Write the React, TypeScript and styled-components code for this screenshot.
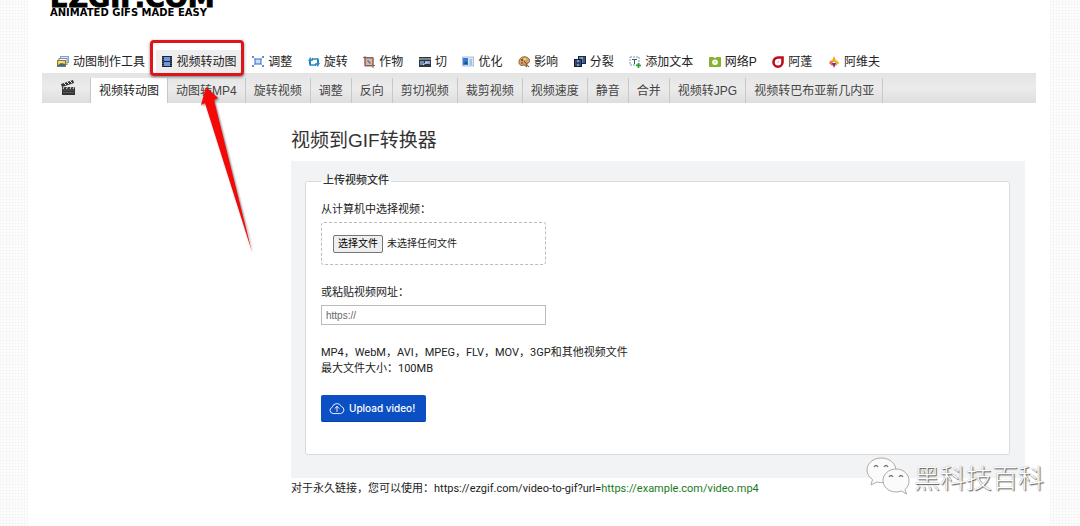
import React from "react";
import styled, { createGlobalStyle } from "styled-components";

const sans = `"Liberation Sans", "Noto Sans CJK SC", sans-serif`;
const ui = `Roboto, "Noto Sans CJK SC", sans-serif`;

const GlobalStyle = createGlobalStyle`
  * { box-sizing: border-box; }
  body {
    margin: 0;
    min-height: 100vh;
    color: #222;
    font: 11px/16px ${ui};
    background-color: #fdfdfd;
    background-image:
      repeating-linear-gradient(90deg, rgba(0,0,0,.018) 0 1px, transparent 1px 3px),
      repeating-linear-gradient(0deg, rgba(0,0,0,.018) 0 1px, transparent 1px 3px);
  }
`;

const Page = styled.div`
  position: relative;
  margin: 0 30px 0 28px;
  padding: 0 14px 30px;
  min-height: 100vh;
  background: #fff;
`;

const Header = styled.header`
  display: flex;
  flex-direction: column;
  justify-content: flex-end;
  height: 18px;
  margin-bottom: 32px;
  padding-left: 8px;
  overflow: hidden;
`;

const Brand = styled.a`
  flex: none;
  color: #000;
  text-decoration: none;
  font-family: "DejaVu Sans", sans-serif;
  font-weight: 700;
`;

const BrandName = styled.div`
  font-size: 27px;
  line-height: 20px;
  -webkit-text-stroke: 1px #000;
`;

const Tagline = styled.div`
  font-size: 10px;
  line-height: 10px;
`;

const MainNav = styled.nav`
  display: flex;
  justify-content: space-between;
  max-width: 843px;
  padding-left: 10px;
  font-family: ${sans};
`;

const NavLink = styled.a<{ $active?: boolean }>`
  position: relative;
  display: flex;
  align-items: center;
  gap: 4px;
  height: 23px;
  padding: 0 5px;
  white-space: nowrap;
  font-size: 12px;
  color: #222;
  text-decoration: none;
  background: ${(p) => (p.$active ? "#eee" : "transparent")};
  svg { flex: none; }
`;

const Highlight = styled.span`
  position: absolute;
  inset: -10px -2px -3px -6px;
  border: 3px solid #dd1518;
  border-radius: 4px;
  box-shadow: 0 1px 3px rgba(0, 0, 0, 0.5);
`;

const Arrow = styled.svg`
  position: absolute;
  z-index: 2;
  left: 42px;
  top: 36px;
  filter: drop-shadow(1px 1px 1px rgba(0, 0, 0, 0.5));
`;

const SubNav = styled.nav`
  display: flex;
  height: 30px;
  padding-top: 5px;
  font-family: ${sans};
  background: linear-gradient(#e4e4e4, #ebebeb 50%, #dedede);
`;

const Tab = styled.a<{ $active?: boolean }>`
  display: flex;
  align-items: center;
  padding: 0 8px;
  border-right: 1px solid #c8c8c8;
  white-space: nowrap;
  font-size: 12px;
  color: ${(p) => (p.$active ? "#222" : "#444")};
  text-decoration: none;
  background: ${(p) => (p.$active ? "#fff" : "transparent")};
`;

const HomeTab = styled(Tab)`
  padding: 0 15px 5px 19px;
`;

const Columns = styled.div`
  display: grid;
  grid-template-columns: 249px minmax(0, 1fr);
  padding-right: 11px;
`;

const Content = styled.main`
  grid-column: 2;
`;

const Title = styled.h1`
  margin: 26px 0 8px;
  font: 400 19px/24px ${sans};
  color: #333;
`;

const Panel = styled.form`
  padding: 12px 15px 23px 14px;
  background: #f1f3f5;
`;

const Group = styled.fieldset`
  margin: 0;
  padding: 13px 15px 32px;
  border: 1px solid #d9dbdd;
  border-radius: 2px;
  background: #fff;
`;

const Legend = styled.legend`
  padding: 0 2px;
  font-weight: 500;
  color: #333;
`;

const Field = styled.div`
  display: flex;
  flex-direction: column;
  gap: 4px;
  width: 225px;
  margin-bottom: 20px;
`;

const DropZone = styled.div`
  display: flex;
  align-items: center;
  gap: 4px;
  height: 43px;
  padding: 0 11px;
  border: 1px dashed #bbb;
  border-radius: 3px;
  font-size: 10px;
`;

const FileInput = styled.input`
  position: absolute;
  width: 1px;
  height: 1px;
  opacity: 0;
`;

const FileButton = styled.label`
  padding: 0 4px;
  border: 1px solid #767676;
  border-radius: 2px;
  background: #efefef;
  color: #000;
`;

const UrlInput = styled.input`
  height: 20px;
  padding: 0 4px;
  border: 1px solid #bbb;
  font: 10px ${sans};
  &::placeholder { color: #666; }
`;

const Hint = styled.p`
  margin: 0 0 18px;
`;

const Submit = styled.button`
  display: flex;
  align-items: center;
  gap: 4px;
  height: 27px;
  padding: 0 11px 0 8px;
  border: 0;
  border-bottom: 1px solid #0a3fa0;
  border-radius: 2px;
  background: #0b4fc4;
  color: #fff;
  font: 500 10px Inter, sans-serif;
`;

const Permalink = styled.p`
  margin: 3px 0 0;
  span { color: #1c7a1c; }
`;

const Watermark = styled.div`
  position: absolute;
  z-index: 3;
  right: 6px;
  top: 457px;
  display: flex;
  align-items: center;
  gap: 4px;
  font: 300 26px/40px "Noto Sans CJK SC", sans-serif;
  color: #fff;
  text-shadow: 1px 1px 1px #555, 0 0 1px #888;
`;

const Icon = ({ children }: { children: React.ReactNode }) => (
  <svg width="12" height="12" viewBox="0 0 12 12" fill="none" aria-hidden="true">{children}</svg>
);

const icons = {
  maker: (
    <Icon>
      <rect x="3.5" y=".5" width="8" height="6" fill="#dcebf8" stroke="#7ba2cc" />
      <rect x="2" y="2.5" width="8" height="6" fill="#fff" stroke="#7a8fa5" />
      <rect x=".5" y="4.5" width="8" height="6" fill="#f1cf43" stroke="#8b7b35" />
      <path d="M1 9l3-2 4 1v2H1z" fill="#356b9b" />
      <path d="M2 6h4" stroke="#fff6a5" />
    </Icon>
  ),
  film: (
    <Icon>
      <rect x="1" y="0" width="10" height="11" fill="#20242f" />
      <rect x="3" y="1" width="6" height="4" fill="#6d97e0" />
      <rect x="3" y="6" width="6" height="4" fill="#6d97e0" />
      <path d="M2 1v10M10 1v10" stroke="#8d94a6" strokeWidth=".8" strokeDasharray="1 1" />
    </Icon>
  ),
  resize: (
    <Icon>
      <rect x="3" y="3" width="6" height="5" fill="#c7dcfa" stroke="#3465c8" />
      <path d="M0 1h2M1 0v2M12 1h-2M11 0v2M0 10h2M1 11V9M12 10h-2M11 11V9" stroke="#2f5ec4" />
      <path d="M1 1l2 2M11 1L9 3M1 10l2-2M11 10L9 8" stroke="#6f93dc" strokeWidth=".8" />
    </Icon>
  ),
  rotate: (
    <Icon>
      <path d="M4 3h5q1 0 1 1v4M8 9H3q-1 0-1-1V4" stroke="#2582bd" strokeWidth="2" />
      <path d="M0 5l2.200-4L5 5zM7 7h5L9.800 11z" fill="#2f8fca" />
      <path d="M5 3h4M3 9h4" stroke="#8fd2f2" />
    </Icon>
  ),
  crop: (
    <Icon>
      <rect x="2" y="2" width="8" height="8" fill="#e0b49b" stroke="#8b6a5c" />
      <path d="M0 1.500h10V12M2 0v9.500h10" stroke="#7c6467" />
      <path d="M4.500 4.500l3 3" stroke="#5674b8" strokeWidth="1.500" />
    </Icon>
  ),
  cut: (
    <Icon>
      <rect x="0" y="1" width="12" height="10" fill="#303640" />
      <path d="M0 3h12" stroke="#d8d2bc" />
      <rect x="1" y="5" width="4" height="4" fill="#6c91bd" />
      <rect x="6" y="5" width="5" height="3" fill="#8db1d8" />
      <path d="M4 9l4-3" stroke="#dde" />
    </Icon>
  ),
  optimize: (
    <Icon>
      <rect x=".5" y="1" width="11" height="9" fill="#d7e9f8" stroke="#a9c3dc" />
      <rect x="1" y="2" width="5" height="7" fill="#367ccc" />
      <path d="M2 8l2-3 2 3" fill="#174d91" />
      <path d="M7.500 4H10M7.500 6H10M7.500 8H10" stroke="#6d9bcb" />
    </Icon>
  ),
  effects: (
    <Icon>
      <path d="M1 6C1 2 5 0 8 1c4 1 5 5 2 6L8 8l1 3-3-2C3 10 1 9 1 6z" fill="#d8a45e" stroke="#87613b" />
      <circle cx="4" cy="4" r="1" fill="#574132" />
      <circle cx="7" cy="3" r="1" fill="#f5e2a6" />
      <circle cx="4" cy="7" r="1" fill="#a44d34" />
      <path d="M6 5l5 6" stroke="#5c4a3e" />
    </Icon>
  ),
  split: (
    <Icon>
      <rect x="4.5" y=".5" width="7" height="7" fill="#5f83bd" stroke="#20283a" />
      <rect x=".5" y="3.5" width="7" height="7" fill="#4a6fae" stroke="#151c2c" />
      <path d="M2 4v6M6 4v6M2 7h4M10 1v6" stroke="#1b263c" />
      <path d="M3 5h2M3 9h2M7 2h2" stroke="#a7c4ec" />
    </Icon>
  ),
  text: (
    <Icon>
      <rect x="1" y="1" width="9" height="8" stroke="#7798b6" strokeDasharray="2 1" />
      <path d="M3 3.500h5M5.500 3v5" stroke="#46596c" />
      <path d="M9.500 7v5M7 9.500h5" stroke="#25a12c" strokeWidth="1.600" />
    </Icon>
  ),
  png: (
    <Icon>
      <path d="M1 1h3l1 .8h2L8 1h3q1 0 1 1v8q0 1-1 1H1q-1 0-1-1V2q0-1 1-1z" fill="#86b32d" />
      <circle cx="6" cy="6.300" r="2.800" fill="#fff" />
      <circle cx="6" cy="6.300" r="1" fill="#c5dc98" />
    </Icon>
  ),
  apng: (
    <Icon>
      <path d="M1.500 6.200A4.500 4.500 0 0 1 6 1.500h4.500v4.700a4.500 4.500 0 0 1-9 0z" stroke="#bd0b20" strokeWidth="2.600" />
      <path d="M5.500 7l1.500-2" stroke="#e9a3ab" />
    </Icon>
  ),
  avif: (
    <Icon>
      <path d="M6 0l2.500 6h-5z" fill="#f3a51b" />
      <path d="M3 4l3 4-2 2-3-3z" fill="#ee7048" />
      <path d="M9 4L6 8l2 2 3-3z" fill="#d8bf31" />
      <path d="M4 7h4l-2 5z" fill="#7d2e83" />
    </Icon>
  ),
};

const navItems: { label: string; icon: keyof typeof icons; active?: boolean }[] = [
  { label: "动图制作工具", icon: "maker" },
  { label: "视频转动图", icon: "film", active: true },
  { label: "调整", icon: "resize" },
  { label: "旋转", icon: "rotate" },
  { label: "作物", icon: "crop" },
  { label: "切", icon: "cut" },
  { label: "优化", icon: "optimize" },
  { label: "影响", icon: "effects" },
  { label: "分裂", icon: "split" },
  { label: "添加文本", icon: "text" },
  { label: "网络P", icon: "png" },
  { label: "阿蓬", icon: "apng" },
  { label: "阿维夫", icon: "avif" },
];

const tabs = [
  "视频转动图", "动图转MP4", "旋转视频", "调整", "反向", "剪切视频", "裁剪视频",
  "视频速度", "静音", "合并", "视频转JPG", "视频转巴布亚新几内亚",
];

const Clapper = () => (
  <svg width="14" height="16" viewBox="0 0 14 16" aria-hidden="true">
    <path d="M0 4L12 0l1 3L1 7z" fill="#333" />
    <path d="M3 3l2 2M6 2l2 2M9 1l2 2" stroke="#e6e6e6" />
    <path d="M1 7h13v8H1z" fill="#333" />
    <path d="M3 7l-1 2M6.500 7l-1 2M10 7L9 9M13 7l-1 2" stroke="#e6e6e6" />
    <path d="M2 10h11M2 12.500h11" stroke="#777" strokeWidth=".6" />
  </svg>
);

const CloudUpload = () => (
  <svg width="16" height="13" viewBox="0 0 16 13" fill="none" stroke="#fff" strokeWidth=".9" strokeLinecap="round" strokeLinejoin="round" aria-hidden="true">
    <path d="M3.800 11.500A3.200 3.200 0 0 1 3.200 5.300 4.800 4.800 0 0 1 12.300 4.500 3.600 3.600 0 0 1 12 11.500z" />
    <path d="M8 9.500v-5M6 6.300l2-2 2 2" />
  </svg>
);

const ChatBubbles = () => (
  <svg width="44" height="40" viewBox="0 0 44 40" fill="#fbfbfb" stroke="#aaa" strokeWidth="1" aria-hidden="true">
    <path d="M15 1C7 1 1 6.500 1 13c0 4 2 7 5.500 9.500L5 28l6-3c2 .5 4 .8 7 .5C31 25 31 14 29 9c-2-5-8-8-14-8z" />
    <path d="M30 12c-7 0-13 5-13 11.500S23 35 30 35c2 0 4-.4 5.500-1l5 3-1.500-4.500c2.500-2 4-5 4-9C43 17 37 12 30 12z" />
    <path d="M8 10q2-3 4 0M18 10q2-3 4 0M23 20q2-3 4 0M33 20q2-3 4 0" fill="none" stroke="#777" strokeWidth="1.300" />
  </svg>
);

export default function App() {
  return (
    <>
      <GlobalStyle />
      <Page>
        <Header>
          <Brand href="#">
            <BrandName>EZGIF.COM</BrandName>
            <Tagline>ANIMATED GIFS MADE EASY</Tagline>
          </Brand>
        </Header>
        <MainNav>
          {navItems.map((item) => (
            <NavLink key={item.label} href="#" $active={item.active}>
              {icons[item.icon]}
              {item.label}
              {item.active && (
                <>
                  <Highlight />
                  <Arrow width="56" height="170" viewBox="0 0 56 170" aria-hidden="true">
                    <path d="M8 1L20 12l-4 2 38 152L7 17l-4 2z" fill="#f40808" />
                  </Arrow>
                </>
              )}
            </NavLink>
          ))}
        </MainNav>
        <SubNav>
          <HomeTab href="#" aria-label="video"><Clapper /></HomeTab>
          {tabs.map((label, i) => (
            <Tab key={label} href="#" $active={i === 0}>{label}</Tab>
          ))}
        </SubNav>
        <Columns>
          <Content>
            <Title>视频到GIF转换器</Title>
            <Panel onSubmit={(e) => e.preventDefault()}>
              <Group>
                <Legend>上传视频文件</Legend>
                <Field>
                  <label htmlFor="file">从计算机中选择视频：</label>
                  <DropZone>
                    <FileInput id="file" type="file" />
                    <FileButton htmlFor="file">选择文件</FileButton>
                    <span>未选择任何文件</span>
                  </DropZone>
                </Field>
                <Field>
                  <label htmlFor="url">或粘贴视频网址：</label>
                  <UrlInput id="url" type="text" placeholder="https://" />
                </Field>
                <Hint>
                  MP4，WebM，AVI，MPEG，FLV，MOV，3GP和其他视频文件
                  <br />
                  最大文件大小：100MB
                </Hint>
                <Submit type="submit"><CloudUpload />Upload video!</Submit>
              </Group>
            </Panel>
            <Permalink>
              对于永久链接，您可以使用：https://ezgif.com/video-to-gif?url=<span>https://example.com/video.mp4</span>
            </Permalink>
          </Content>
        </Columns>
        <Watermark><ChatBubbles />黑科技百科</Watermark>
      </Page>
    </>
  );
}
